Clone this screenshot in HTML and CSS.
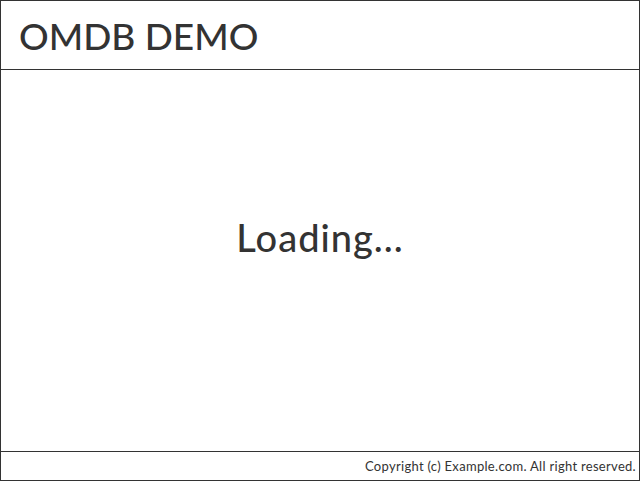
FILE: index.html
```html
<!DOCTYPE html>
<html>
<head>
<meta charset="utf-8">
<link rel="stylesheet" href="styles.css">
</head>
<body>
<div class="app">
  <header class="header"><h1 class="title">OMDB DEMO</h1></header>
  <main class="main"><div class="loading">Loading...</div></main>
  <footer class="footer">Copyright (c) Example.com. All right reserved.</footer>
</div>
</body>
</html>
```
FILE: styles.css
```css
html, body { margin: 0; padding: 0; background: #fff; }
body { font-family: "Lato", "DejaVu Sans", sans-serif; color: #333; }
.app {
  box-sizing: border-box;
  width: 640px;
  height: 481px;
  border: 1px solid #333;
  display: flex;
  flex-direction: column;
}
.header {
  height: 68px;
  border-bottom: 1px solid #333;
  display: flex;
  align-items: center;
  padding-left: 18px;
}
.title {
  margin: 0;
  font-size: 37px;
  font-weight: 500;
  line-height: 1;
}
.main {
  flex: 1;
  display: flex;
  justify-content: center;
  padding-top: 148px;
}
.loading {
  font-size: 38px;
  font-weight: 500;
  line-height: 1;
  letter-spacing: 1px;
}
.footer {
  height: 28px;
  border-top: 1px solid #333;
  display: flex;
  align-items: center;
  justify-content: flex-end;
  padding-right: 3px;
  font-size: 13px;
  letter-spacing: 0.3px;
}
```
